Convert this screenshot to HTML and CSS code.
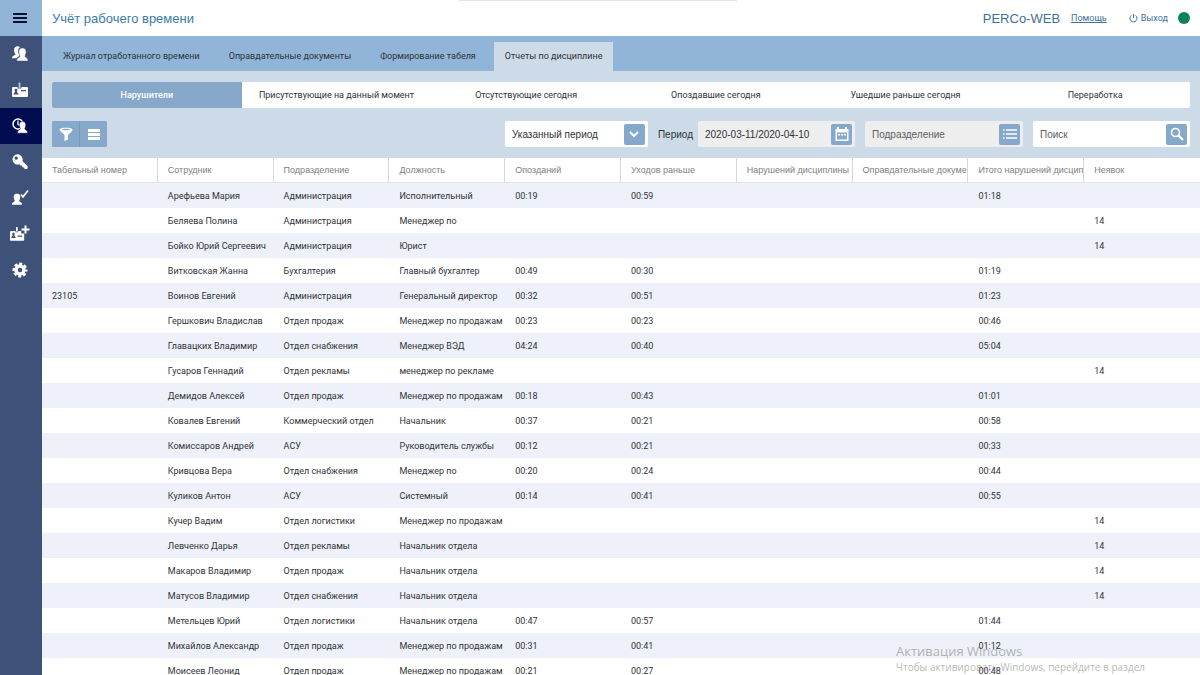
FILE: index.html
```html
<!DOCTYPE html>
<html lang="ru">
<head>
<meta charset="utf-8">
<title>Учёт рабочего времени</title>
<link rel="stylesheet" href="styles.css">
</head>
<body>
<div class="app">
  <nav class="sidebar" aria-label="Разделы">
    <button class="menu-button" type="button" aria-label="Меню">
      <svg width="14" height="10" viewBox="0 0 14 10"><path d="M0 1h14M0 5h14M0 9h14" stroke="#0b1030" stroke-width="2"/></svg>
    </button>
    <a class="side-link" href="#" aria-label="Персонал">
      <svg width="20" height="20" viewBox="0 0 20 20"><path fill="#fff" d="M7 2.200C8.500 2 9.500 2.700 9.900 3.500 8.100 4.500 7.800 6.700 8.500 9.200c.4 1.300.9 2 1.200 2.800-1.200.6-2.700.9-3.200 2.200H2c0-2 1.200-2.400 3.300-3.200.3-.8-.2-1.300-.6-2C3.500 6.200 3.700 2.900 7 2.200z"/><path fill="#fff" stroke="#3e5178" stroke-width=".5" d="M12.500 4c2.900 0 4 2.300 3.500 5-.3 1.500-.9 2.300-1 3.300.3 1.400 3.100 1.300 3.100 4.700H6.700c0-3.400 3-3.300 3.300-4.700-.1-1-.8-1.800-1.100-3.300-.5-2.700.7-5 3.600-5z"/></svg>
    </a>
    <a class="side-link" href="#" aria-label="Бюро пропусков">
      <svg width="20" height="20" viewBox="0 0 20 20"><path fill="#fff" fill-rule="evenodd" d="M3 7h4.500v1.500h4V7H17a1 1 0 0 1 1 1v8a1 1 0 0 1-1 1H3a1 1 0 0 1-1-1V8a1 1 0 0 1 1-1zm3 1.800c-1.700 0-1.700 1.800-.9 3.200-.3 1-1.600.8-1.600 2.500h5c0-1.700-1.300-1.500-1.600-2.500.8-1.400.8-3.200-.9-3.200zM11 10v1.300h5V10z"/><path fill="#9fc0e0" d="M8.500 2.500h2V8h-2z"/></svg>
    </a>
    <a class="side-link active" href="#" aria-label="Учёт рабочего времени" aria-current="page">
      <svg width="20" height="20" viewBox="0 0 20 20"><circle cx="8" cy="8" r="5" fill="none" stroke="#fff" stroke-width="1.500"/><path d="M8 4.500v4l2 1" fill="none" stroke="#fff" stroke-width="1.300"/><path fill="#fff" stroke="#020c50" stroke-width=".6" d="M12.500 5.500c2.800 0 3.700 2 3.200 4.400-.3 1.500-.8 2-.9 2.900.3 1.300 3 1.300 3 4.400H7.300c0-3 2.700-3.100 3-4.400-.1-.9-.6-1.400-.9-2.900-.5-2.400.3-4.400 3.100-4.400z"/></svg>
    </a>
    <a class="side-link" href="#" aria-label="Контроль доступа">
      <svg width="20" height="20" viewBox="0 0 20 20"><path fill="#fff" fill-rule="evenodd" d="M7.500 2.200a5.200 5.200 0 0 1 4.900 6.900l5 4.900c.5.500.4 2.800-.4 3h-2.400l-.5-1.500-1.700-.2-.3-1.500-1.700-.3-1-1.200A5.200 5.200 0 1 1 7.500 2.200zM6.200 4.400a1.700 1.700 0 1 0 .1 3.400 1.700 1.700 0 0 0-.1-3.400z"/></svg>
    </a>
    <a class="side-link" href="#" aria-label="Верификация">
      <svg width="20" height="20" viewBox="0 0 20 20"><path fill="#fff" d="M7 5.800c2.900 0 3.600 2 3.200 4.300-.2 1.400-.9 1.900-1 2.700.2 1.400 2.800 1.200 2.800 3.900H2c0-2.700 2.600-2.500 2.800-3.900-.1-.8-.8-1.300-1-2.700-.4-2.300.3-4.300 3.200-4.300z"/><path d="M11 6.500l2 2.300 5-6.300" fill="none" stroke="#fff" stroke-width="1.800"/></svg>
    </a>
    <a class="side-link" href="#" aria-label="Заказ пропуска">
      <svg width="20" height="20" viewBox="0 0 20 20"><path fill="#fff" fill-rule="evenodd" d="M1 7h4.500v1.300h2.700V7h3v2.500h3V16a.8.800 0 0 1-.8.800H.8A.8.800 0 0 1 0 16V8a1 1 0 0 1 1-1zm2.500 1.600c-1.400 0-1.400 1.600-.8 2.800-.3 1-1.400.9-1.400 2.700h4.400c0-1.800-1.100-1.700-1.400-2.700.6-1.200.6-2.800-.8-2.800zM7.500 11.500v1.200h4.700v-1.200z"/><path fill="#fff" d="M6 3h1.700v4.500H6zM14.500 1.500h2V4.500h3v2h-3v3h-2v-3h-3v-2h3z"/></svg>
    </a>
    <a class="side-link" href="#" aria-label="Администрирование">
      <svg width="20" height="20" viewBox="0 0 20 20"><circle cx="10" cy="10" r="4" fill="none" stroke="#fff" stroke-width="3.400"/><circle cx="10" cy="10" r="6.200" fill="none" stroke="#fff" stroke-width="2.600" stroke-dasharray="3 1.870" stroke-dashoffset="1.500"/></svg>
    </a>
  </nav>

  <div class="page">
    <header class="topbar">
      <h1 class="title">Учёт рабочего времени</h1>
      <span class="brand">PERCo-WEB</span>
      <a class="help" href="#">Помощь</a>
      <button class="logout" type="button">
        <svg width="9" height="9" viewBox="0 0 9 9" fill="none" stroke="#3d7199"><path d="M2.500 1.500a3.500 3.500 0 1 0 4 0M4.500 0v4"/></svg>
        Выход
      </button>
      <span class="status" role="img" aria-label="Подключено"></span>
    </header>

    <nav class="tabs">
      <a class="tab" href="#">Журнал отработанного времени</a>
      <a class="tab" href="#">Оправдательные документы</a>
      <a class="tab" href="#">Формирование табеля</a>
      <a class="tab active" href="#" aria-current="page">Отчеты по дисциплине</a>
    </nav>

    <section class="controls">
      <div class="reports">
        <button class="report active" type="button">Нарушители</button>
        <button class="report" type="button">Присутствующие на данный момент</button>
        <button class="report" type="button">Отсутствующие сегодня</button>
        <button class="report" type="button">Опоздавшие сегодня</button>
        <button class="report" type="button">Ушедшие раньше сегодня</button>
        <button class="report" type="button">Переработка</button>
      </div>
      <div class="filters">
        <div class="tools">
          <button class="tool" type="button" aria-label="Фильтр">
            <svg width="16" height="16" viewBox="0 0 16 16"><path fill="#fff" fill-rule="evenodd" d="M1.500 3.500C1.500 1.300 14.500 1.300 14.500 3.500c0 1.500-2.500 3.500-4.500 5.500V13.500L6.500 15V9C4.500 7 1.500 5 1.500 3.500zm2 0c1.500 1.100 7.500 1.100 9 0-1.500-1-7.500-1-9 0z"/></svg>
          </button>
          <button class="tool" type="button" aria-label="Список">
            <svg width="14" height="14" viewBox="0 0 14 14"><path fill="#fff" d="M1 2h12v3H1zM1 6h12v3H1zM1 10h12v3H1z"/></svg>
          </button>
        </div>
        <div class="field period">
          <select class="control select" aria-label="Тип периода"><option>Указанный период</option></select>
          <span class="field-icon">
            <svg width="10" height="8" viewBox="0 0 10 8"><path d="M1 2l4 4 4-4" fill="none" stroke="#fff" stroke-width="2"/></svg>
          </span>
        </div>
        <label class="label" for="dates">Период</label>
        <div class="field muted dates">
          <input class="control" id="dates" type="text" value="2020-03-11/2020-04-10" readonly>
          <button class="field-icon" type="button" aria-label="Календарь">
            <svg width="16" height="16" viewBox="0 0 16 16"><path fill="#fff" fill-rule="evenodd" d="M3 1h2v2h6V1h2v2h1.500v12h-13V3H3zM3 6.500v7h10v-7z"/><path fill="#fff" d="M4 8h2v1.500H4zM7 8h2v1.500H7zM10 8h2v1.500h-2z"/></svg>
          </button>
        </div>
        <div class="field muted unit">
          <input class="control" type="text" placeholder="Подразделение" aria-label="Подразделение" readonly>
          <button class="field-icon" type="button" aria-label="Выбрать подразделение">
            <svg width="14" height="12" viewBox="0 0 14 12"><path stroke="#fff" stroke-width="1.500" d="M0 2h1.500M3 2h11M0 6h1.500M3 6h11M0 10h1.500M3 10h11"/></svg>
          </button>
        </div>
        <div class="field search">
          <input class="control" type="text" placeholder="Поиск" aria-label="Поиск">
          <button class="field-icon" type="button" aria-label="Найти">
            <svg width="14" height="14" viewBox="0 0 14 14" fill="none" stroke="#fff"><circle cx="5.500" cy="5.500" r="4" stroke-width="1.600"/><path d="M8.500 8.500l4.500 4.500" stroke-width="2.200"/></svg>
          </button>
        </div>
      </div>
    </section>

    <table class="grid">
      <thead>
        <tr>
          <th>Табельный номер</th><th>Сотрудник</th><th>Подразделение</th><th>Должность</th><th>Опозданий</th>
          <th>Уходов раньше</th><th>Нарушений дисциплины всего</th><th>Оправдательные документы</th><th>Итого нарушений дисциплины</th><th>Неявок</th>
        </tr>
      </thead>
      <tbody id="rows"></tbody>
    </table>
  </div>

  <aside class="watermark">
    <div class="watermark-title">Активация Windows</div>
    <div class="watermark-text">Чтобы активировать Windows, перейдите в раздел</div>
  </aside>
</div>
<script src="rows.js"></script>
</body>
</html>
```
FILE: styles.css
```css
* { box-sizing: border-box; }

body {
  margin: 0;
  font-family: Roboto, "Liberation Sans", Arial, sans-serif;
  font-size: 9px;
  color: #2f3437;
  background: #fff;
}

button, input, select { font: inherit; color: inherit; border: 0; padding: 0; background: none; }
a { color: inherit; text-decoration: none; }
svg { display: block; }

.app { display: flex; height: 100vh; overflow: hidden; }

.sidebar { flex: 0 0 42px; display: flex; flex-direction: column; background: #3e5178; }
.menu-button, .side-link { display: flex; align-items: center; justify-content: center; height: 36px; padding: 0 3px 0 0; }
.menu-button { background: #90b5d8; }
.side-link { padding-bottom: 1px; }
.side-link.active { background: #020c50; }

.page { flex: 1; min-width: 0; }

.topbar {
  position: relative;
  display: flex;
  align-items: center;
  height: 36px;
  padding: 0 10px;
  color: #3d7199;
}
.topbar::before {
  content: "";
  position: absolute;
  top: 0;
  left: 36%;
  width: 24%;
  height: 1px;
  background: #e4e4e4;
}
.title { margin: 0 auto 0 0; font-family: "Liberation Sans", Arial, sans-serif; font-size: 13px; font-weight: 400; color: #3a7ca5; }
.brand { margin-right: 11px; font-family: "Liberation Sans", Arial, sans-serif; font-size: 13px; }
.help { margin-right: 22px; text-decoration: underline; }
.logout { display: flex; align-items: center; gap: 3px; margin-right: 10px; }
.status { width: 12px; height: 12px; border-radius: 50%; background: #0c8456; }

.tabs { display: flex; gap: 7px; height: 35px; padding: 6px 0 0 10px; background: #90b5d8; }
.tab { display: flex; align-items: center; padding: 0 11px 1px; }
.tab.active { background: #cddae7; }

.controls { padding: 11px 10px; background: #cddae7; }
.reports { display: grid; grid-template-columns: repeat(6, 1fr); height: 26px; border-radius: 2px; background: #fff; overflow: hidden; }
.report.active { background: #85a8cb; color: #fff; font-weight: 500; }

.filters { display: flex; align-items: center; gap: 10px; margin-top: 13px; font-family: "Liberation Sans", Arial, sans-serif; font-size: 10px; }
.tools { display: flex; gap: 1px; margin-right: auto; border-radius: 2px; background: #7698bd; overflow: hidden; }
.tool { display: flex; align-items: center; justify-content: center; width: 27px; height: 26px; background: #85a8cb; }
.label { margin-right: -5px; }

.field { display: flex; align-items: center; height: 26px; padding: 0 3px 0 7px; border-radius: 2px; background: #fff; }
.field.muted { background: #eee; }
.control { flex: 1; min-width: 0; height: 26px; appearance: none; outline: 0; }
.control::placeholder { color: #5c6166; opacity: 1; }
.field-icon { display: flex; flex: 0 0 21px; align-items: center; justify-content: center; height: 21px; border-radius: 2px; background: #85a8cb; }
.period { width: 143px; }
.dates { width: 157px; }
.unit { width: 158px; }
.search { width: 157px; }

.grid { width: 100%; table-layout: fixed; border-collapse: separate; border-spacing: 0; }
.grid th, .grid td { padding: 0 0 0 10px; white-space: nowrap; text-align: left; }
.grid th { height: 25px; overflow: hidden; font-family: "Liberation Sans", Arial, sans-serif; font-weight: 400; color: #808080; border-right: 1px solid #d8d8d8; border-bottom: 1px solid #dfe3ea; }
.grid th:last-child { border-right: 0; }
.grid td { height: 25px; }
.grid tbody tr:nth-child(odd) { background: #eef1f9; }

.watermark { position: absolute; right: 50px; bottom: 0; width: 254px; color: rgba(120, 120, 120, 0.55); font-family: "Open Sans", sans-serif; white-space: nowrap; pointer-events: none; }
.watermark-title { font-size: 13px; line-height: 16px; }
.watermark-text { font-size: 10px; line-height: 16px; }
```
FILE: rows.js
```js
const rows = [
  ["", "Арефьева Мария", "Администрация", "Исполнительный", "00:19", "00:59", "01:18", ""],
  ["", "Беляева Полина", "Администрация", "Менеджер по", "", "", "", "14"],
  ["", "Бойко Юрий Сергеевич", "Администрация", "Юрист", "", "", "", "14"],
  ["", "Витковская Жанна", "Бухгалтерия", "Главный бухгалтер", "00:49", "00:30", "01:19", ""],
  ["23105", "Воинов Евгений", "Администрация", "Генеральный директор", "00:32", "00:51", "01:23", ""],
  ["", "Гершкович Владислав", "Отдел продаж", "Менеджер по продажам", "00:23", "00:23", "00:46", ""],
  ["", "Главацких Владимир", "Отдел снабжения", "Менеджер ВЭД", "04:24", "00:40", "05:04", ""],
  ["", "Гусаров Геннадий", "Отдел рекламы", "менеджер по рекламе", "", "", "", "14"],
  ["", "Демидов Алексей", "Отдел продаж", "Менеджер по продажам", "00:18", "00:43", "01:01", ""],
  ["", "Ковалев Евгений", "Коммерческий отдел", "Начальник", "00:37", "00:21", "00:58", ""],
  ["", "Комиссаров Андрей", "АСУ", "Руководитель службы", "00:12", "00:21", "00:33", ""],
  ["", "Кривцова Вера", "Отдел снабжения", "Менеджер по", "00:20", "00:24", "00:44", ""],
  ["", "Куликов Антон", "АСУ", "Системный", "00:14", "00:41", "00:55", ""],
  ["", "Кучер Вадим", "Отдел логистики", "Менеджер по продажам", "", "", "", "14"],
  ["", "Левченко Дарья", "Отдел рекламы", "Начальник отдела", "", "", "", "14"],
  ["", "Макаров Владимир", "Отдел продаж", "Начальник отдела", "", "", "", "14"],
  ["", "Матусов Владимир", "Отдел снабжения", "Начальник отдела", "", "", "", "14"],
  ["", "Метельцев Юрий", "Отдел логистики", "Начальник отдела", "00:47", "00:57", "01:44", ""],
  ["", "Михайлов Александр", "Отдел продаж", "Менеджер по продажам", "00:31", "00:41", "01:12", ""],
  ["", "Моисеев Леонид", "Отдел продаж", "Менеджер по продажам", "00:21", "00:27", "00:48", ""]
];

const body = document.getElementById("rows");
for (const [number, name, unit, post, late, early, total, absent] of rows) {
  const row = body.insertRow();
  for (const value of [number, name, unit, post, late, early, "", "", total, absent]) {
    row.insertCell().textContent = value;
  }
}
```
